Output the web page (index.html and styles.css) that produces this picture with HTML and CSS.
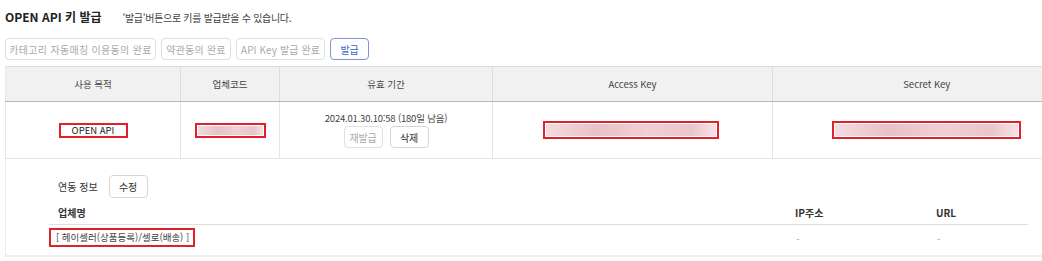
FILE: index.html
```html
<!DOCTYPE html>
<html lang="ko">
<head>
<meta charset="utf-8">
<link rel="stylesheet" href="styles.css">
</head>
<body>
<div class="page">
  <div class="title-row">
    <h1 class="title">OPEN API 키 발급</h1>
    <span class="hint">'발급'버튼으로 키를 발급받을 수 있습니다.</span>
  </div>
  <div class="steps">
    <button class="btn btn-off w1">카테고리 자동매칭 이용동의 완료</button>
    <button class="btn btn-off w2">약관동의 완료</button>
    <button class="btn btn-off w3">API Key 발급 완료</button>
    <button class="btn btn-primary w4">발급</button>
  </div>
  <table class="keys">
    <colgroup>
      <col class="c1"><col class="c2"><col class="c3"><col class="c4"><col class="c5">
    </colgroup>
    <thead>
      <tr><th>사용 목적</th><th>업체코드</th><th>유효 기간</th><th>Access Key</th><th>Secret Key</th></tr>
    </thead>
    <tbody>
      <tr>
        <td><span class="redbox plain">OPEN API</span></td>
        <td><span class="redbox blur b-code"></span></td>
        <td class="period">
          <div class="date">2024.01.30.10:58 (180일 남음)</div>
          <div class="row-btns">
            <button class="btn sm btn-off">재발급</button>
            <button class="btn sm">삭제</button>
          </div>
        </td>
        <td><span class="redbox blur b-access"></span></td>
        <td><span class="redbox blur b-secret"></span></td>
      </tr>
    </tbody>
  </table>
  <div class="link-section">
    <div class="link-head">
      <span class="link-label">연동 정보</span>
      <button class="btn edit">수정</button>
    </div>
    <div class="vendor-table">
      <div class="vrow vhead">
        <span class="vc name">업체명</span>
        <span class="vc ip">IP주소</span>
        <span class="vc url">URL</span>
      </div>
      <div class="vrow vbody">
        <span class="vc name"><span class="redbox vendor">[ 헤이셀러(상품등록)/셀로(배송) ]</span></span>
        <span class="vc ip dash">-</span>
        <span class="vc url dash">-</span>
      </div>
    </div>
  </div>
</div>
</body>
</html>
```

FILE: styles.css
```css
* { box-sizing: border-box; }
html, body { margin: 0; padding: 0; background: #fff; }
body {
  font-family: "Noto Sans CJK KR", "Noto Sans", "Liberation Sans", sans-serif;
  color: #333;
  width: 1042px;
  height: 261px;
  overflow: hidden;
}
.page { padding: 8px 0 0 5px; }

.title-row { display: flex; align-items: baseline; height: 20px; }
.title { margin: 0; font-size: 12px; font-weight: 700; color: #222; letter-spacing: 0; }
.hint { margin-left: 21px; font-size: 10px; color: #444; letter-spacing: -0.3px; }

.steps { display: flex; gap: 5px; margin-top: 10px; height: 22px; }
.btn {
  font-family: inherit;
  font-size: 10px;
  height: 22px;
  padding: 0;
  white-space: nowrap;
  background: #fff;
  border: 1px solid #d6d6d6;
  border-radius: 4px;
  color: #333;
  cursor: pointer;
  letter-spacing: -0.2px;
}
.btn-off { color: #aaa; border-color: #e0e0e0; }
.btn-primary { color: #3f63c8; border-color: #7d94d8; }
.w1 { width: 151px; letter-spacing: 0.3px; }
.w2 { width: 70px; letter-spacing: 0.2px; }
.w3 { width: 89px; letter-spacing: 0.1px; }
.w4 { width: 39px; }

.keys {
  margin-top: 6px;
  width: 1075px;
  border-collapse: collapse;
  table-layout: fixed;
  font-size: 9.5px;
}
.c1 { width: 175px; }
.c2 { width: 99px; }
.c3 { width: 213px; }
.c4 { width: 280px; }
.c5 { width: 308px; }
.keys th {
  height: 35px;
  background: #f1f1f1;
  font-weight: 400;
  color: #444;
  border-top: 1px solid #dcdcdc;
  border-left: 1px solid #dcdcdc;
  border-bottom: 1px solid #b9b9b9;
}
.keys td {
  height: 57px;
  text-align: center;
  vertical-align: middle;
  border-left: 1px solid #e4e4e4;
  border-bottom: 1px solid #e4e4e4;
}
.keys th:first-child, .keys td:first-child { border-left: 1px solid #e8e8e8; }

.redbox {
  display: inline-block;
  border: 2px solid #e0202a;
  vertical-align: middle;
}
.plain { width: 69px; height: 15px; line-height: 11px; font-size: 9.5px; color: #222; }
.blur {
  height: 16px;
  background: linear-gradient(90deg, #f3dce0 0%, #e8c2c8 30%, #f0d0d5 60%, #e9c6cb 85%, #f6e3e6 100%);
  box-shadow: inset 0 0 0 1px #fff;
}
.b-code { width: 71px; height: 15px; }
.b-access { width: 176px; height: 18px; transform: translateX(-2px); }
.b-secret { width: 189px; height: 18px; }

.period { padding-top: 0; }
.date { font-size: 9.5px; color: #444; letter-spacing: -0.2px; }
.row-btns { display: flex; justify-content: center; gap: 7px; margin-top: 1px; }
.btn.sm { height: 22px; width: 39px; font-size: 10px; font-weight: 400; }

.link-section {
  width: 1037px;
  height: 98px;
  border-left: 1px solid #ececec;
  border-bottom: 2px solid #eeeeee;
  padding: 16px 14px 0 43px;
}
.link-head { display: flex; align-items: center; gap: 11px; height: 23px; }
.link-label { font-size: 10px; color: #333; padding-left: 9px; }
.btn.edit { width: 39px; height: 23px; }

.vendor-table { margin-top: 3px; }
.vrow { display: flex; align-items: center; }
.vhead { height: 24px; border-bottom: 1px solid #dedede; font-weight: 700; font-size: 10px; color: #333; }
.vbody { height: 24px; font-size: 10px; color: #333; align-items: flex-start; }
.vc.name { width: 741px; padding-left: 9px; }
.vbody .vc.name { padding-left: 0; }
.vc.ip { width: 141px; padding-left: 5px; }
.vc.url { padding-left: 5px; }
.vbody .dash { color: #aaa; padding-left: 6px; padding-top: 6px; }
.vendor {
  height: 19px;
  line-height: 15px;
  padding: 0 4px 0 5px;
  font-size: 9.5px;
  letter-spacing: 0;
  color: #444;
  margin-top: 3px;
}
```
